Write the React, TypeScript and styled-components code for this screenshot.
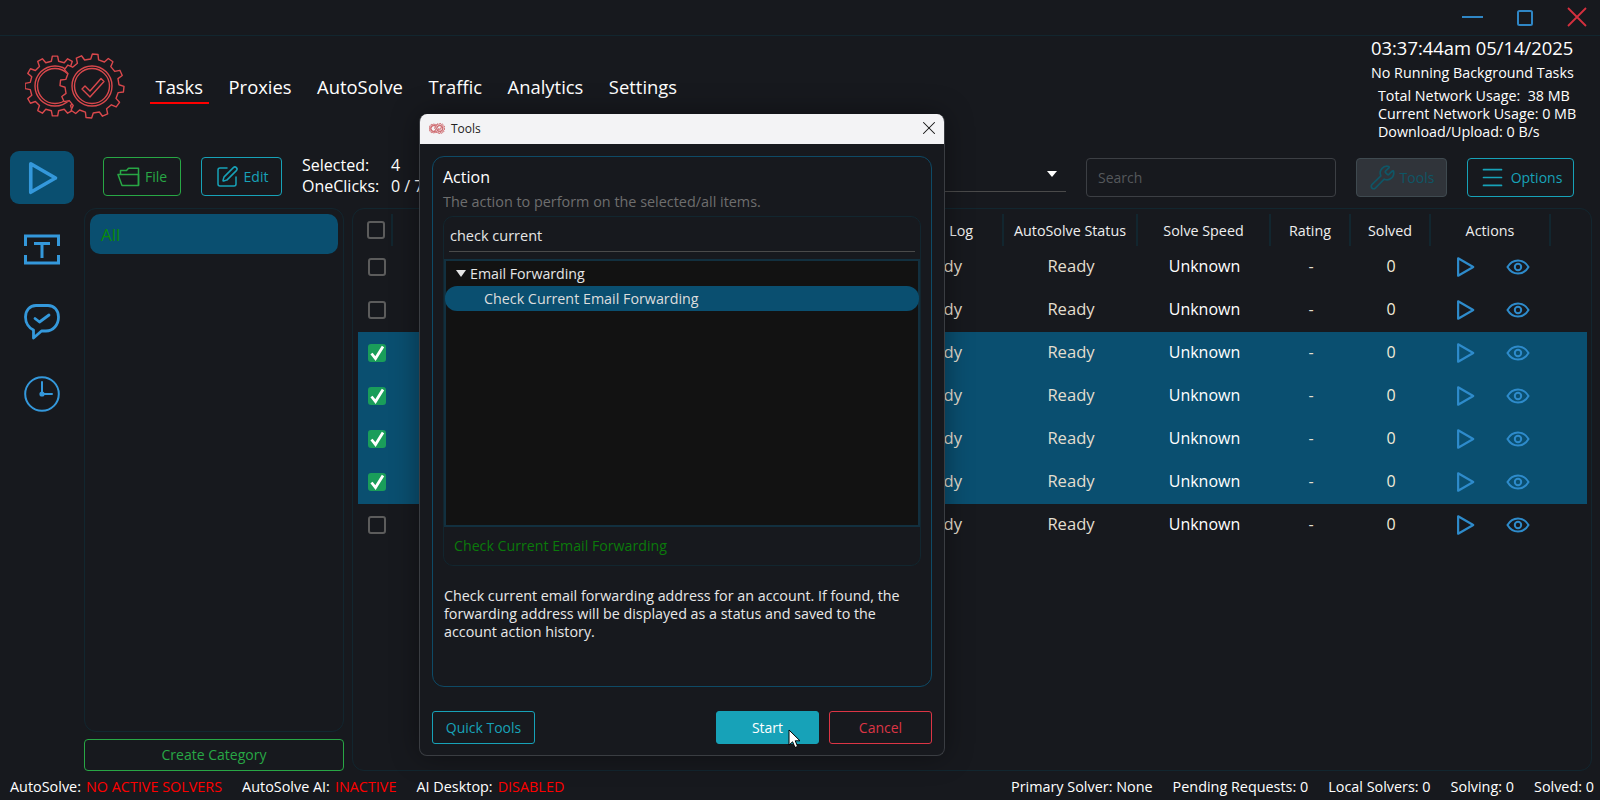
import React from "react";
import styled, { createGlobalStyle } from "styled-components";
import { SquarePen, Wrench, Menu, X } from "lucide-react";

const BG = "#17191e";
const LINE = "#12262f";
const BLUE = "#0a4f70";
const ICON = "#3498db";
const TEAL = "#17a2b8";
const GREEN = "#28a745";
const RED = "#ff0000";

const Global = createGlobalStyle`
  html, body { margin: 0; padding: 0; background: ${BG}; }
  * { box-sizing: border-box; }
  body { font-family: "Open Sans", "Noto Sans", sans-serif; color: #fff; overflow: hidden; }
`;

const Page = styled.div`
  width: 1600px; height: 800px; display: flex; flex-direction: column; position: relative;
  background: ${BG}; overflow: hidden; font-size: 14px;
`;
const TitleBar = styled.div`
  height: 36px; flex: none; border-bottom: 1px solid ${LINE}; padding-right: 13px; gap: 34px;
  display: flex; justify-content: flex-end; align-items: flex-start;
`;
const WinButton = styled.div<{ $c: string }>`
  height: 35px; color: ${p => p.$c};
  svg { display: block; margin-top: 7px; }
`;
const Header = styled.header`
  height: 115px; flex: none; display: flex; align-items: flex-start; padding-left: 25px; padding-right: 25px;
`;
const LogoBox = styled.div`
  width: 100px; height: 66px; margin-top: 17px; flex: none;
  svg { display: block; }
`;
const Nav = styled.nav`
  display: flex; gap: 14.5px; margin-top: 40px; margin-left: 25px;
`;
const NavItem = styled.div<{ $active?: boolean }>`
  padding: 0 5.5px; height: 28px; line-height: 22px; font-size: 18.4px; color: #fff;
  border-bottom: 2px solid ${p => (p.$active ? RED : "transparent")};
`;
const Info = styled.div`
  margin-left: auto; width: 204px; display: flex; flex-direction: column;
`;
const Clock = styled.div`
  font-size: 18.4px; line-height: 24px; white-space: nowrap; font-weight: 500;
`;
const InfoLine = styled.div`
  font-size: 14.3px; line-height: 18px; white-space: nowrap;
`;
const Running = styled(InfoLine)`
  margin-top: 4px;
`;
const Network = styled.div`
  margin-top: 5px; margin-left: 7px;
`;
const Content = styled.div`
  flex: 1; min-height: 0; display: flex;
`;
const Sidebar = styled.aside`
  width: 84px; flex: none; padding-left: 10px; display: flex; flex-direction: column; gap: 19px;
`;
const SideButton = styled.div<{ $active?: boolean }>`
  width: 64px; height: 53px; border-radius: 9px; display: flex; align-items: center; justify-content: center;
  background: ${p => (p.$active ? BLUE : "transparent")}; color: ${ICON};
  svg { display: block; }
`;
const Main = styled.main`
  flex: 1; min-width: 0; display: flex; flex-direction: column; padding-right: 8px;
`;
const Toolbar = styled.div`
  height: 39px; margin: 6px 0 12px; padding-left: 19px; padding-right: 18px; display: flex; align-items: center; flex: none;
`;
const OutlineButton = styled.div<{ $c: string; $w: number }>`
  width: ${p => p.$w}px; height: 39px; flex: none; border: 1px solid ${p => p.$c}; border-radius: 4px;
  display: flex; align-items: center; justify-content: center; gap: 5px; color: ${p => p.$c}; font-size: 14px;
  svg { display: block; flex: none; }
`;
const RightButton = styled(OutlineButton)`
  align-self: flex-start; margin-top: 1px;
`;
const DisabledButton = styled(RightButton)`
  background: #30343a; border-color: #3f4a50; color: #0f5666; gap: 4px;
`;
const Stats = styled.div`
  display: grid; grid-template-columns: 89px auto; margin-left: 20px; font-size: 16px; line-height: 21px; padding-bottom: 2px; flex: none; white-space: nowrap;
`;
const DropdownField = styled.div`
  flex: 1; height: 35px; margin-left: 20px; border-bottom: 1px solid #4a4a4a; position: relative; align-self: flex-start;
  display: flex; justify-content: flex-end; align-items: center; padding-right: 9px;
`;
const Caret = styled.span`
  width: 0; height: 0; border-left: 5px solid transparent; border-right: 5px solid transparent; border-top: 6px solid #fff; display: block;
`;
const SearchBox = styled.div`
  width: 250px; height: 39px; flex: none; margin: 1px 20px 0; align-self: flex-start; border: 1px solid #3c3f44; border-radius: 4px;
  display: flex; align-items: center; padding-left: 11px; color: #55585c; font-size: 14px;
`;
const Gap20 = styled.div`
  width: 20px; flex: none;
`;
const Panels = styled.div`
  flex: 1; min-height: 0; display: flex; gap: 8px; padding-bottom: 1px;
`;
const LeftCol = styled.div`
  width: 260px; flex: none; display: flex; flex-direction: column; gap: 7px;
`;
const Panel = styled.div`
  border: 1px solid ${LINE}; border-radius: 12px;
`;
const CategoryPanel = styled(Panel)`
  flex: 1; padding: 5px;
`;
const CategoryItem = styled.div`
  height: 40px; border-radius: 10px; background: ${BLUE}; color: #0a8a0a; font-size: 17px; display: flex; align-items: center; padding-left: 11px;
`;
const CreateButton = styled.div`
  height: 32px; flex: none; border: 1px solid ${GREEN}; border-radius: 4px; color: ${GREEN}; font-size: 14px; padding-bottom: 2px;
  display: flex; align-items: center; justify-content: center;
`;
const TablePanel = styled(Panel)`
  flex: 1; min-width: 0; padding: 5px 4px 5px 5px;
`;
const COLS = "35px 611px 134px 133px 80px 80px 120px 36px";
const HeadRow = styled.div`
  display: grid; grid-template-columns: ${COLS}; height: 32px;
`;
const HeadCell = styled.div<{ $end?: boolean }>`
  display: flex; align-items: center; justify-content: ${p => (p.$end ? "flex-end" : "center")};
  padding-right: ${p => (p.$end ? "29px" : "0")};
  border-right: 2px solid ${LINE}; font-size: 14.3px; color: #eee; white-space: nowrap;
`;
const BlankCell = styled.div``;
const Row = styled.div<{ $sel?: boolean }>`
  display: grid; grid-template-columns: ${COLS}; height: 43px; padding-bottom: 2px; align-items: center; background: ${p => (p.$sel ? BLUE : "transparent")};
  font-size: 16px;
`;
const Cell = styled.div<{ $c?: string; $size?: number }>`
  text-align: center; color: ${p => p.$c || "#fff"}; white-space: nowrap; padding-bottom: 2px;
  font-size: ${p => p.$size || 16}px;
`;
const LogCell = styled(Cell)`
  text-align: right; padding-right: 42px; color: #e3decf;
`;
const CheckCell = styled.div`
  display: flex; justify-content: center; padding-left: 2px; align-items: center; height: 100%;
`;
const Box = styled.div<{ $on?: boolean }>`
  width: 18px; height: 18px; border-radius: 3px; border: ${p => (p.$on ? "none" : "2px solid #5c5c5c")};
  background: ${p => (p.$on ? "#1a9d5a" : "transparent")};
  svg { display: block; }
`;
const ActionCell = styled.div`
  display: flex; align-items: center; justify-content: center; gap: 30px; padding-left: 2px; color: #2e8bcb;
  svg { display: block; }
`;
const StatusBar = styled.footer`
  height: 28px; flex: none; display: flex; justify-content: space-between; align-items: center; padding: 0 6px 0 10px; font-size: 14.4px; white-space: nowrap;
`;
const StatusGroup = styled.div`
  display: flex; gap: 20px;
`;
const StatusItem = styled.span`
  display: flex; gap: 5px;
`;
const Bad = styled.span`
  color: ${RED};
`;

const Dialog = styled.section`
  position: absolute; left: 419px; top: 114px; width: 526px; height: 642px; background: ${BG};
  border: 1px solid #3a3d42; border-top: none; border-radius: 8px; box-shadow: 0 0 28px rgba(0,0,0,.38);
  display: flex; flex-direction: column; overflow: hidden;
`;
const DialogTitle = styled.div`
  height: 30px; flex: none; background: #f3f3f5; color: #222; font-size: 12px; display: flex; align-items: center; padding: 0 4px 2px 9px; gap: 6px;
  svg { display: block; flex: none; }
`;
const TitleText = styled.span`
  flex: 1;
`;
const DialogBody = styled.div`
  flex: 1; padding: 12px 12px 11px 12px; display: flex; flex-direction: column;
`;
const ActionPanel = styled.div`
  height: 531px; flex: none; border: 1px solid #0e4a66; border-radius: 12px; padding: 9px 10px;
`;
const ActionTitle = styled.div`
  font-size: 16px; line-height: 22px; color: #fff;
`;
const ActionHint = styled.div`
  font-size: 14.4px; line-height: 18px; margin-top: 5px; color: #6e6e6e;
`;
const Picker = styled.div`
  height: 350px; margin-top: 5px; border: 1px solid ${LINE}; border-radius: 10px; display: flex; flex-direction: column;
`;
const SearchInput = styled.div`
  height: 35px; flex: none; margin: 0 5px; padding: 2px 1px 0; border-bottom: 1px solid #4a4a4a; display: flex; align-items: center; font-size: 14.5px; color: #e6e6e6;
`;
const Tree = styled.div`
  margin-top: 7px; height: 268px; flex: none; background: #121212; border: 2px solid #12303f;
`;
const TreeGroup = styled.div`
  height: 25px; display: flex; align-items: center; gap: 4px; padding-left: 10px; font-size: 14.2px; color: #e6e6e6;
`;
const TreeCaret = styled.span`
  width: 0; height: 0; border-left: 5px solid transparent; border-right: 5px solid transparent; border-top: 7px solid #e6e6e6; display: block;
`;
const TreeItem = styled.div`
  height: 25px; margin: 0 -1px; border-radius: 12px; background: ${BLUE}; display: flex; align-items: center; padding-left: 39px; font-size: 14.3px; color: #ddd;
`;
const PickerFoot = styled.div`
  flex: 1; display: flex; align-items: center; padding-left: 10px; padding-bottom: 1px; color: #0b7a0b; font-size: 14.2px;
`;
const Description = styled.p`
  margin: 21px 0 0 1px; font-size: 14.3px; line-height: 18px; color: #e8e8e8; white-space: nowrap;
`;
const DialogButtons = styled.div`
  margin-top: 24px; display: flex; gap: 10px;
`;
const DlgButton = styled.div<{ $c: string; $fill?: boolean }>`
  width: 103px; height: 33px; padding-bottom: 1px; border-radius: 3px; border: 1px solid ${p => p.$c}; display: flex; align-items: center; justify-content: center;
  font-size: 14px; color: ${p => (p.$fill ? "#fff" : p.$c)}; background: ${p => (p.$fill ? p.$c : "transparent")};
`;
const Spring = styled.div`
  flex: 1;
`;
const Pointer = styled.svg`
  position: absolute; left: 788px; top: 729px; display: block;
`;

function gearPath(cx: number, cy: number, r1: number, r2: number, teeth: number, rot = 0) {
  const pts: string[] = [];
  const step = (Math.PI * 2) / teeth;
  for (let i = 0; i < teeth; i++) {
    const a = rot + i * step;
    const at = (f: number, r: number) => {
      const t = a + f * step;
      return `${(cx + Math.cos(t) * r).toFixed(2)} ${(cy + Math.sin(t) * r).toFixed(2)}`;
    };
    pts.push(at(-0.28, r1), at(-0.17, r2), at(0.17, r2), at(0.28, r1));
  }
  return "M" + pts.join("L") + "Z";
}

function Logo({ w, h, sw = 1.4, c = "#d9484c", id }: { w: number; h: number; sw?: number; c?: string; id: string }) {
  const right = gearPath(67, 33, 27, 32, 12, 0.1);
  const left = gearPath(30, 33, 25, 30, 12, 0);
  return (
    <svg width={w} height={h} viewBox="0 0 100 66" fill="none" stroke={c} strokeWidth={sw} strokeLinejoin="round">
      <mask id={id} maskUnits="userSpaceOnUse" x="0" y="0" width="100" height="66">
        <rect width="100" height="66" fill="#fff" stroke="none" />
        <path d={right} fill="#000" stroke="#000" strokeWidth="1" />
      </mask>
      <g mask={`url(#${id})`}>
        <path d={left} />
        <circle cx="30" cy="33" r="20" />
        <circle cx="30" cy="33" r="17.5" />
      </g>
      <path d={right} />
      <circle cx="67" cy="33" r="20" />
      <circle cx="67" cy="33" r="17.5" />
      <path d="M57 36l3-3 5 5 11-12.5 3 3L65 44z" />
    </svg>
  );
}

const PlayIcon = ({ size, sw }: { size: number; sw: number }) => (
  <svg width={size} height={size} viewBox="0 0 24 24" fill="none" stroke="currentColor" strokeWidth={sw} strokeLinejoin="round">
    <path d="M4.5 2.5 L21 12 L4.5 21.5 Z" />
  </svg>
);
const EyeIcon = () => (
  <svg width="24" height="24" viewBox="0 0 24 24" fill="none" stroke="currentColor" strokeWidth="2">
    <path d="M1.5 12C4 7.7 8 5.5 12 5.5S20 7.7 22.5 12C20 16.3 16 18.5 12 18.5S4 16.3 1.5 12Z" />
    <circle cx="12" cy="12" r="3.2" />
  </svg>
);
const FolderIcon = () => (
  <svg width="23" height="20" viewBox="0 0 23 20" fill="none" stroke="currentColor" strokeWidth="1.5" strokeLinejoin="round">
    <path d="M3.5 7.5V3.5H9.5L11.5 1.2H21.5V18.5" />
    <path d="M1 7.5H21.5V18.5H5Z" />
  </svg>
);
const TextIcon = () => (
  <svg width="36" height="31" viewBox="0 0 36 31" fill="none" stroke="currentColor" strokeWidth="3">
    <path d="M1.5 12V2H34.5V12M1.5 21V29H34.5V21" />
    <path d="M10 9.5H26M18 9.5V24" />
  </svg>
);
const ChatIcon = () => (
  <svg width="36" height="36" viewBox="0 0 36 36" fill="none" stroke="currentColor" strokeWidth="2.8" strokeLinejoin="round" strokeLinecap="round">
    <path d="M12 1.5H24C30.5 1.5 34.5 6.5 34.5 13C34.5 21 29 27 22 27H17.5L9.5 34V26C5 24 1.5 19 1.5 13C1.5 6.5 5.5 1.5 12 1.5Z" />
    <path d="M11 14.5L15.5 18L25 11" />
  </svg>
);
const ClockIcon = () => (
  <svg width="36" height="36" viewBox="0 0 36 36" fill="none" stroke="currentColor" strokeWidth="2" strokeLinecap="round">
    <circle cx="18" cy="18" r="16.8" />
    <path d="M18 6V18H28" />
    <circle cx="18" cy="18" r="1.6" fill="currentColor" />
  </svg>
);
const Tick = () => (
  <svg width="18" height="18" viewBox="0 0 18 18" fill="none" stroke="#fff" strokeWidth="2.8">
    <path d="M3.5 9.5L7.5 14.5L15 2.5" />
  </svg>
);

const rows = [false, false, true, true, true, true, false];

export default function App() {
  return (
    <Page>
      <Global />
      <TitleBar>
        <WinButton $c="#2f86c5">
          <svg width="21" height="20" viewBox="0 0 21 20" fill="none" stroke="currentColor" strokeWidth="2"><path d="M0 10H21" /></svg>
        </WinButton>
        <WinButton $c="#2f86c5">
          <svg width="16" height="20" viewBox="0 0 16 20" fill="none" stroke="currentColor" strokeWidth="2"><rect x="1" y="4" width="14" height="14" rx="1.5" /></svg>
        </WinButton>
        <WinButton $c="#d5303f">
          <svg width="20" height="20" viewBox="0 0 20 20" fill="none" stroke="currentColor" strokeWidth="1.8"><path d="M1 1L19 19M19 1L1 19" /></svg>
        </WinButton>
      </TitleBar>
      <Header>
        <LogoBox><Logo w={100} h={66} id="logo-main" /></LogoBox>
        <Nav>
          <NavItem $active>Tasks</NavItem>
          <NavItem>Proxies</NavItem>
          <NavItem>AutoSolve</NavItem>
          <NavItem>Traffic</NavItem>
          <NavItem>Analytics</NavItem>
          <NavItem>Settings</NavItem>
        </Nav>
        <Info>
          <Clock>03:37:44am 05/14/2025</Clock>
          <Running>No Running Background Tasks</Running>
          <Network>
            <InfoLine>Total Network Usage:&nbsp; 38 MB</InfoLine>
            <InfoLine>Current Network Usage: 0 MB</InfoLine>
            <InfoLine>Download/Upload: 0 B/s</InfoLine>
          </Network>
        </Info>
      </Header>
      <Content>
        <Sidebar>
          <SideButton $active><PlayIcon size={36} sw={2.4} /></SideButton>
          <SideButton><TextIcon /></SideButton>
          <SideButton><ChatIcon /></SideButton>
          <SideButton><ClockIcon /></SideButton>
        </Sidebar>
        <Main>
          <Toolbar>
            <OutlineButton $c={GREEN} $w={78}><FolderIcon />File</OutlineButton>
            <Gap20 />
            <OutlineButton $c={TEAL} $w={81}><SquarePen size={24} strokeWidth={1.5} />Edit</OutlineButton>
            <Stats>
              <span>Selected:</span><span>4</span>
              <span>OneClicks:</span><span>0 / 7</span>
            </Stats>
            <DropdownField><Caret /></DropdownField>
            <SearchBox>Search</SearchBox>
            <DisabledButton $c="#0f5666" $w={91}><Wrench size={27} strokeWidth={1.5} />Tools</DisabledButton>
            <Gap20 />
            <RightButton $c={TEAL} $w={107}><Menu size={27} strokeWidth={1.5} />Options</RightButton>
          </Toolbar>
          <Panels>
            <LeftCol>
              <CategoryPanel><CategoryItem>All</CategoryItem></CategoryPanel>
              <CreateButton>Create Category</CreateButton>
            </LeftCol>
            <TablePanel>
              <HeadRow>
                <HeadCell><CheckCell><Box /></CheckCell></HeadCell>
                <HeadCell $end>Log</HeadCell>
                <HeadCell>AutoSolve Status</HeadCell>
                <HeadCell>Solve Speed</HeadCell>
                <HeadCell>Rating</HeadCell>
                <HeadCell>Solved</HeadCell>
                <HeadCell>Actions</HeadCell>
                <BlankCell />
              </HeadRow>
              {rows.map((sel, i) => (
                <Row key={i} $sel={sel}>
                  <CheckCell><Box $on={sel}>{sel && <Tick />}</Box></CheckCell>
                  <LogCell $size={16.6}>Ready</LogCell>
                  <Cell $c="#e3decf" $size={16.6}>Ready</Cell>
                  <Cell>Unknown</Cell>
                  <Cell $c="#e3decf">-</Cell>
                  <Cell $c="#f2ecd8">0</Cell>
                  <ActionCell><PlayIcon size={22} sw={2.4} /><EyeIcon /></ActionCell>
                  <BlankCell />
                </Row>
              ))}
            </TablePanel>
          </Panels>
        </Main>
      </Content>
      <StatusBar>
        <StatusGroup>
          <StatusItem>AutoSolve: <Bad>NO ACTIVE SOLVERS</Bad></StatusItem>
          <StatusItem>AutoSolve AI: <Bad>INACTIVE</Bad></StatusItem>
          <StatusItem>AI Desktop: <Bad>DISABLED</Bad></StatusItem>
        </StatusGroup>
        <StatusGroup>
          <span>Primary Solver: None</span>
          <span>Pending Requests: 0</span>
          <span>Local Solvers: 0</span>
          <span>Solving: 0</span>
          <span>Solved: 0</span>
        </StatusGroup>
      </StatusBar>

      <Dialog>
        <DialogTitle>
          <Logo w={16} h={11} sw={5} c="#c9575c" id="logo-small" />
          <TitleText>Tools</TitleText>
          <X size={22} strokeWidth={1.1} color="#111" />
        </DialogTitle>
        <DialogBody>
          <ActionPanel>
            <ActionTitle>Action</ActionTitle>
            <ActionHint>The action to perform on the selected/all items.</ActionHint>
            <Picker>
              <SearchInput>check current</SearchInput>
              <Tree>
                <TreeGroup><TreeCaret />Email Forwarding</TreeGroup>
                <TreeItem>Check Current Email Forwarding</TreeItem>
              </Tree>
              <PickerFoot>Check Current Email Forwarding</PickerFoot>
            </Picker>
            <Description>
              Check current email forwarding address for an account. If found, the<br />
              forwarding address will be displayed as a status and saved to the<br />
              account action history.
            </Description>
          </ActionPanel>
          <DialogButtons>
            <DlgButton $c={TEAL}>Quick Tools</DlgButton>
            <Spring />
            <DlgButton $c={TEAL} $fill>Start</DlgButton>
            <DlgButton $c="#dc3545">Cancel</DlgButton>
          </DialogButtons>
        </DialogBody>
      </Dialog>
      <Pointer width="14" height="20" viewBox="0 0 14 20">
        <path d="M1 1V16L4.6 12.8L7 18.5L9.6 17.4L7.2 11.8H12Z" fill="#fff" stroke="#000" strokeWidth="1" />
      </Pointer>
    </Page>
  );
}
